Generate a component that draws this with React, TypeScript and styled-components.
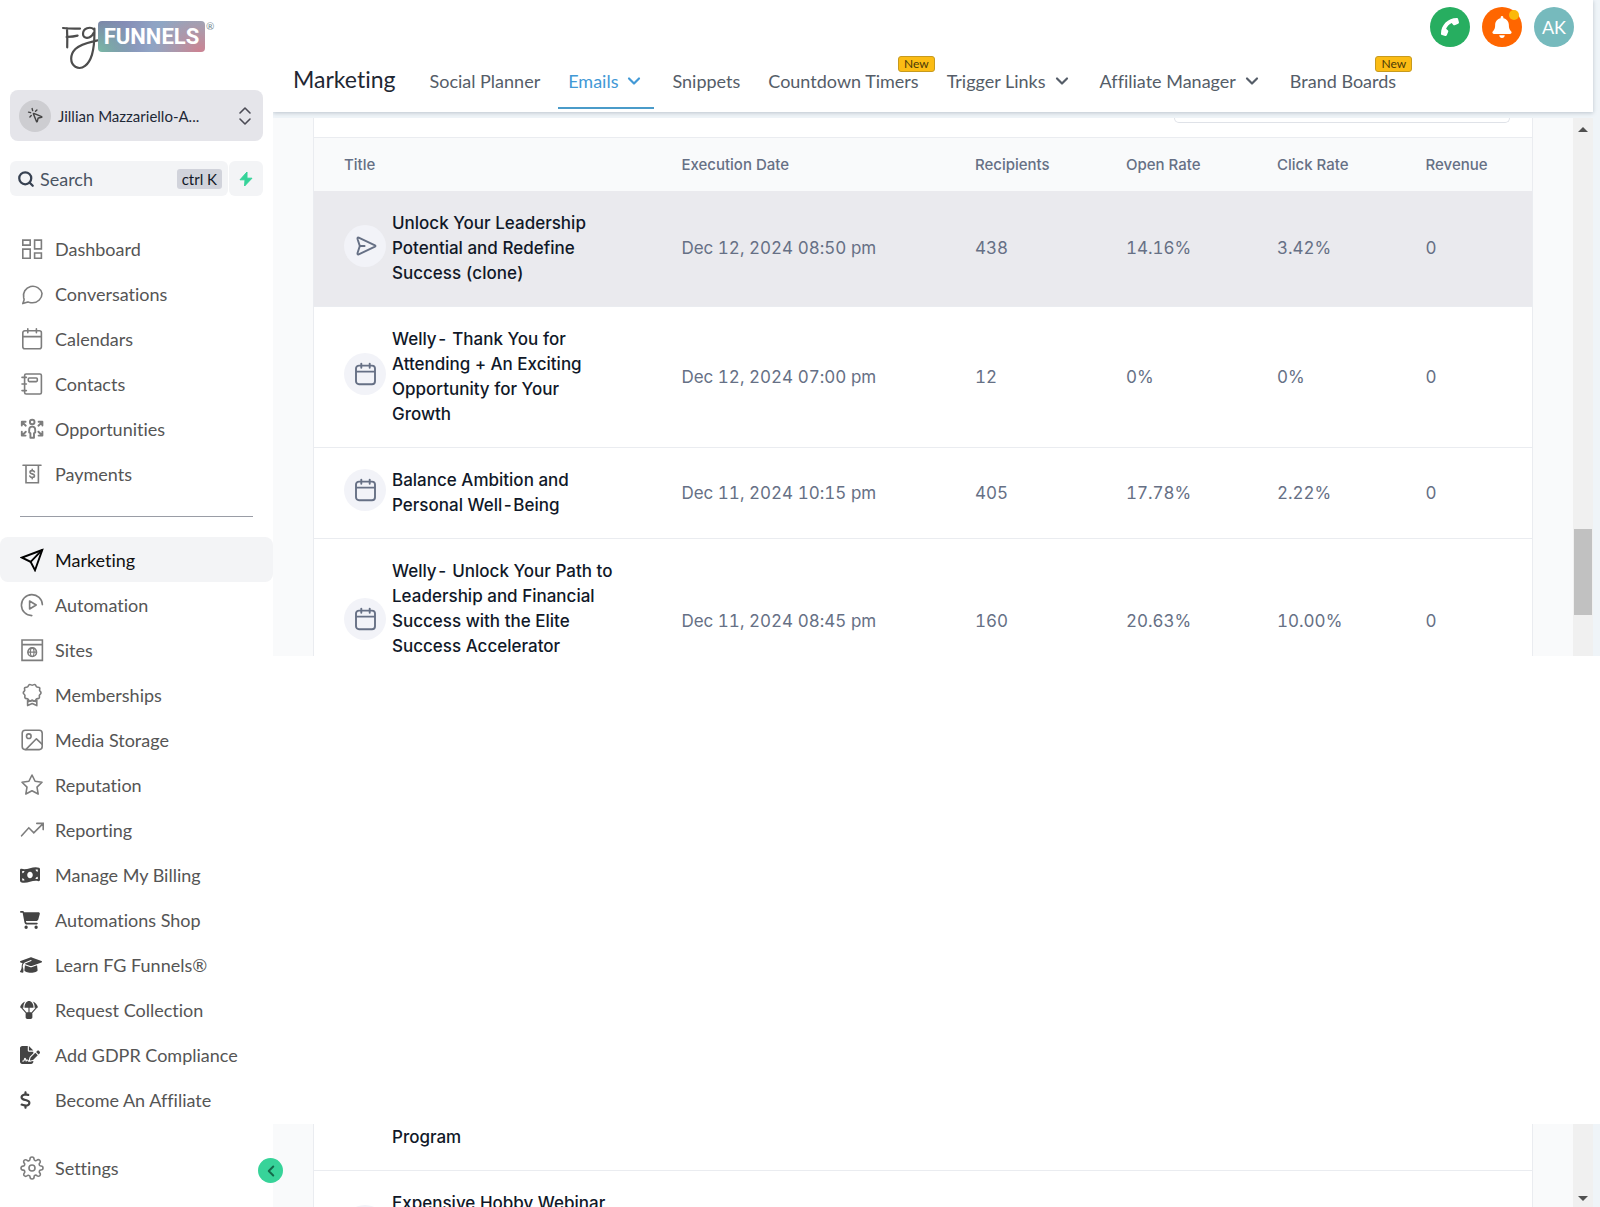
import React from "react";
import styled, { createGlobalStyle, css } from "styled-components";
import { ChevronDown, ChevronLeft, ChevronsUpDown, MousePointerClick, Search } from "lucide-react";
import { FiSettings, FiStar } from "react-icons/fi";
import {
  FaBell,
  FaCartShopping,
  FaDollarSign,
  FaFileSignature,
  FaGraduationCap,
  FaMoneyBillWave,
  FaParachuteBox,
  FaPhone,
} from "react-icons/fa6";

const GlobalStyle = createGlobalStyle`
  *, *::before, *::after { box-sizing: border-box; }
  body { margin: 0; background: #ffffff; font-family: Lato, "Open Sans", sans-serif; font-variant-ligatures: none; }
  button, input { font-family: inherit; }
  a { color: inherit; text-decoration: none; }
`;

const Shell = styled.div`
  display: flex;
  align-items: stretch;
  min-height: 100vh;
  overflow: hidden;
`;

/* ---------- Sidebar ---------- */

const Sidebar = styled.aside`
  position: relative;
  z-index: 2;
  flex: 0 0 273px;
  min-width: 0;
  display: flex;
  flex-direction: column;
  padding-bottom: 17px;
  background: #ffffff;
`;

const LogoLink = styled.a`
  display: flex;
  align-items: flex-start;
  height: 90px;
  padding: 20px 0 0 60px;
`;

const LogoMark = styled.svg`
  flex: none;
  width: 40px;
  height: 50px;
  margin-right: -2px;
`;

const LogoPlate = styled.span`
  display: flex;
  align-items: center;
  justify-content: center;
  width: 107px;
  height: 31px;
  margin-top: 1px;
  border-radius: 4px;
  background:
    radial-gradient(circle at 0% 100%, #79b9a5 0%, transparent 35%),
    radial-gradient(circle at 95% 100%, #cd8292 0%, transparent 45%),
    linear-gradient(100deg, #7c78a8 0%, #8fa3c4 50%, #86b7c6 100%);
  color: #ffffff;
  font-family: Roboto, sans-serif;
  font-size: 22px;
  font-weight: 700;
  line-height: 31px;
`;

const LogoReg = styled.span`
  color: #6d8790;
  font-size: 10px;
  line-height: 13px;
  margin-left: 1px;
`;

const AccountButton = styled.button`
  display: flex;
  align-items: center;
  height: 51px;
  margin: 0 10px;
  padding: 0 6px 0 9px;
  border: 0;
  border-radius: 8px;
  background: #e5e5ea;
  color: #1f2937;
  font-size: 15px;
  text-align: left;
`;

const AccountBadge = styled.span`
  display: grid;
  place-items: center;
  width: 32px;
  height: 32px;
  margin-right: 7px;
  border-radius: 50%;
  background: #cdcdd1;
  color: #444444;
`;

const AccountName = styled.span`
  flex: 1;
`;

const SearchRow = styled.div`
  display: flex;
  gap: 1px;
  margin: 20px 10px 30px;
  height: 35px;
`;

const SearchBox = styled.label`
  flex: 1;
  display: flex;
  align-items: center;
  gap: 5px;
  min-width: 0;
  padding: 0 6px 0 7px;
  border-radius: 6px;
  background: #f3f4f6;
  color: #374151;
  svg { flex: none; }
`;

const SearchInput = styled.input`
  flex: 1;
  width: 100%;
  min-width: 0;
  padding: 0;
  border: 0;
  outline: 0;
  background: transparent;
  color: #4b5563;
  font-size: 18px;
  &::placeholder { color: #4b5563; opacity: 1; }
`;

const Shortcut = styled.kbd`
  flex: none;
  padding: 0 5px;
  border-radius: 3px;
  background: #d1d3db;
  color: #111827;
  font-family: inherit;
  font-size: 15px;
  line-height: 20px;
`;

const QuickButton = styled.button`
  flex: none;
  display: grid;
  place-items: center;
  width: 34px;
  padding: 0;
  border: 0;
  border-radius: 6px;
  background: #f3f4f6;
`;

const NavList = styled.nav`
  display: flex;
  flex-direction: column;
`;

const NavItem = styled.a<{ $active?: boolean }>`
  display: flex;
  align-items: center;
  gap: 11px;
  height: 45px;
  padding: 0 20px;
  border-radius: 8px;
  font-size: 18px;
  line-height: 24px;
  white-space: nowrap;
  color: ${(p) => (p.$active ? "#111111" : "#555555")};
  background: ${(p) => (p.$active ? "#f3f4f6" : "transparent")};
`;

const NavIcon = styled.span<{ $solid?: number; $active?: boolean }>`
  flex: none;
  display: flex;
  align-items: center;
  width: 24px;
  height: 24px;
  color: ${(p) => (p.$active ? "#000000" : p.$solid ? "#444444" : "#7d7d7d")};
  svg {
    display: block;
    flex: none;
    width: ${(p) => p.$solid ?? 24}px;
    height: ${(p) => (p.$solid ? 18 : 24)}px;
  }
`;

const NavDivider = styled.hr`
  width: auto;
  height: 1px;
  margin: 20px 20px;
  border: 0;
  background: #9a9da6;
`;

const SettingsSlot = styled.div`
  margin-top: 23px;
`;

const CollapseButton = styled.button`
  position: absolute;
  right: -10px;
  bottom: 24px;
  display: grid;
  place-items: center;
  width: 25px;
  height: 25px;
  padding: 0;
  border: 0;
  border-radius: 50%;
  background: #37d399;
  color: #14684a;
`;

/* ---------- Main column ---------- */

const Main = styled.main`
  flex: 1;
  min-width: 0;
  display: flex;
  flex-direction: column;
`;

const HeaderBand = styled.div`
  height: 118px;
  padding-right: 7px;
  background: #eff4f8;
`;

const Header = styled.header`
  display: flex;
  flex-direction: column;
  height: 112px;
  background: #ffffff;
  box-shadow: 0 1px 4px rgba(71, 85, 105, 0.3);
`;

const HeaderActions = styled.div`
  display: flex;
  justify-content: flex-end;
  gap: 12px;
  padding: 7px 19px 0 0;
`;

const RoundButton = styled.button<{ $bg: string }>`
  position: relative;
  display: grid;
  place-items: center;
  width: 40px;
  height: 40px;
  padding: 0;
  border: 0;
  border-radius: 50%;
  background: ${(p) => p.$bg};
  color: #ffffff;
  font-size: 18px;
`;

const AlertDot = styled.span`
  position: absolute;
  top: 3px;
  right: 3px;
  width: 10px;
  height: 10px;
  border-radius: 50%;
  background: #fbb90b;
`;

const TabBar = styled.div`
  display: flex;
  align-items: center;
  gap: 8px;
  height: 62px;
  padding-left: 20px;
`;

const SectionTitle = styled.h1`
  margin: 0 16px 0 0;
  padding-top: 2px;
  color: #1f2733;
  font-size: 23px;
  font-weight: 400;
  line-height: 28px;
`;

const Tab = styled.a<{ $active?: boolean }>`
  position: relative;
  display: flex;
  align-items: center;
  gap: 6px;
  height: 62px;
  padding: 9px 10px 2px;
  border-bottom: 2px solid ${(p) => (p.$active ? "#4a9bc9" : "transparent")};
  color: ${(p) => (p.$active ? "#4299d6" : "#555d68")};
  font-size: 18px;
  line-height: 24px;
  white-space: nowrap;
`;

const NewBadge = styled.span`
  position: absolute;
  top: 9px;
  right: -6px;
  padding: 0 5px;
  border: 1px solid #c79a1e;
  border-radius: 3px;
  background: #fbbc14;
  color: #4a3a08;
  font-size: 12px;
  line-height: 14px;
`;

/* ---------- Campaign list ---------- */

const Pane = styled.section<{ $height: number }>`
  flex: none;
  display: flex;
  height: ${(p) => p.$height}px;
  padding-right: 7px;
  overflow: hidden;
  background: #eff4f8;
`;

const PaneBody = styled.div`
  flex: 1;
  min-width: 0;
  padding: 0 40px;
  background: #f9fafb;
`;

const Blank = styled.div`
  flex: 1;
  background: #ffffff;
`;

const Card = styled.div`
  min-height: 100%;
  border: solid #eaecf0;
  border-width: 0 1px;
  background: #ffffff;
`;

const Toolbar = styled.div`
  display: flex;
  justify-content: flex-end;
  align-items: flex-start;
  height: 20px;
  padding-right: 22px;
  border-bottom: 1px solid #eaecf0;
`;

const FilterInput = styled.input`
  width: 336px;
  height: 5px;
  padding: 0;
  border: 1px solid #dfe2e8;
  border-top: 0;
  border-radius: 0 0 8px 8px;
  background: #ffffff;
`;

const Table = styled.table`
  width: 100%;
  border-collapse: collapse;
  table-layout: fixed;
  font-family: Inter, sans-serif;
  text-align: left;
`;

const Col = styled.col<{ $share: number }>`
  width: ${(p) => p.$share}%;
`;

const HeadCell = styled.th`
  height: 53px;
  padding: 0 0 0 30px;
  background: #f9fafb;
  color: #667085;
  font-size: 15px;
  font-weight: 500;
`;

const Row = styled.tr<{ $selected?: boolean }>`
  border-bottom: 1px solid #eaecf0;
  background: ${(p) => (p.$selected ? "#eaeaee" : "#ffffff")};
`;

const Cell = styled.td`
  padding: 20px 0 20px 30px;
  color: #667085;
  font-size: 17px;
  font-variant-numeric: tabular-nums;
  line-height: 25px;
  white-space: nowrap;
`;

const TitleCell = styled(Cell)`
  padding-right: 31px;
  color: #101828;
  font-weight: 500;
  white-space: normal;
`;

const TitleWrap = styled.div<{ $lines?: number }>`
  display: flex;
  align-items: center;
  gap: 6px;
  min-height: ${(p) => (p.$lines ?? 0) * 25}px;
`;

const TitleText = styled.span`
  align-self: flex-start;
`;

const StatusDot = styled.span`
  flex: none;
  display: grid;
  place-items: center;
  width: 42px;
  height: 42px;
  margin-bottom: 6px;
  border-radius: 50%;
  background: #f2f3f8;
  color: #667085;
`;

const ContinuedCell = styled(TitleCell)`
  padding-top: 1px;
  padding-left: 78px;
`;

const Track = styled.div`
  flex: none;
  display: flex;
  flex-direction: column;
  align-items: center;
  width: 20px;
  background: #f0f0f0;
`;

const Arrow = styled.span<{ $down?: boolean }>`
  width: 0;
  height: 0;
  border: 5px solid transparent;
  ${(p) =>
    p.$down
      ? css`
          margin-top: auto;
          margin-bottom: 1px;
          border-top-color: #505050;
        `
      : css`
          margin-top: 4px;
          border-bottom-color: #505050;
        `}
`;

const Thumb = styled.span`
  width: 18px;
  height: 86px;
  margin-top: auto;
  margin-bottom: 41px;
  background: #c1c1c1;
`;

/* ---------- Icons ---------- */

const Stroke = ({ children, width = 1.6 }: { children: React.ReactNode; width?: number }) => (
  <svg
    viewBox="0 0 24 24"
    width="24"
    height="24"
    fill="none"
    stroke="currentColor"
    strokeWidth={width}
    strokeLinecap="round"
    strokeLinejoin="round"
    aria-hidden="true"
  >
    {children}
  </svg>
);

const DashboardIcon = () => (
  <Stroke width={1.6}>
    <path d="M2.8 3.1h7.4v5H2.8zM14.6 3.1h6.8v8.8h-6.8zM2.8 12.1h7.4v9.2H2.8zM14.6 16h6.8v5.3h-6.8z" strokeLinejoin="miter" />
  </Stroke>
);

const ChatIcon = () => (
  <Stroke width={1.6}>
    <path d="M22 11.4a9.400 9.400 0 0 1-9.400 9.400c-1.300 0-2.500-.2-3.600-.6-.5-.2-.8-.2-1.200-.1L2.800 21.600c.8-2.200 1.300-3.300 1.300-4.200 0-.5-.2-.9-.4-1.500A9.400 9.400 0 1 1 22 11.400z" />
  </Stroke>
);

const CalendarIcon = () => (
  <Stroke>
    <path d="M2.800 9.600h18.600M7.800 1.800v4M16.400 1.800v4M4.800 3.800h14.600a2 2 0 0 1 2 2v14a2 2 0 0 1-2 2H4.800a2 2 0 0 1-2-2v-14a2 2 0 0 1 2-2z" />
  </Stroke>
);

const ContactsIcon = () => (
  <Stroke width={1.6}>
    <rect x="4.600" y="2" width="16.800" height="20" rx="1.500" />
    <rect x="8.300" y="6" width="9" height="3.600" rx="1" />
    <path d="M2 5.400h4.400M2 12h4.400M2 18.600h4.400" />
  </Stroke>
);

const OpportunitiesIcon = () => (
  <Stroke width={1.9}>
    <circle cx="12.200" cy="5" r="2.300" />
    <path d="M9.200 12.800c0-2 1.200-3.200 3-3.200s3 1.200 3 3.200v2.600l-1.200.800v4.600h-3.600v-4.600l-1.200-.8z" />
    <path d="M1.800 8.600V4.800h3.800M2.200 5.200l3.600 3.500M22.400 8.600V4.800h-3.800M22 5.200l-3.600 3.500M1.800 14.800v3.800h3.800M2.200 18.200l3.600-3.500M22.400 14.800v3.800h-3.800M22 18.200l-3.600-3.500" />
  </Stroke>
);

const PaymentsIcon = () => (
  <Stroke width={1.600}>
    <path d="M3 3.200h18M6 3.200v17.600h12.400V3.200" strokeLinejoin="miter" />
    <path d="M14.400 9.800c-.3-.8-1.100-1.200-2.200-1.200-1.300 0-2.200.6-2.200 1.600 0 2.300 4.500 1 4.500 3.500 0 1.100-1 1.700-2.300 1.700-1.200 0-2.100-.5-2.400-1.400M12.200 7.200v1.200M12.200 15.600v1.200" />
  </Stroke>
);

const PlaneIcon = () => (
  <Stroke width={1.900}>
    <path d="M22.200 2 2 9.600l8.600 4.200L15 22.200z" strokeLinejoin="miter" />
    <path d="M22 2.200 10.600 13.800" />
  </Stroke>
);

const AutomationIcon = () => (
  <Stroke width={1.600}>
    <path d="M22.400 11.600A10.500 10.500 0 1 0 11.800 22.600" />
    <path d="M9.600 8v8l6.600-4z" />
  </Stroke>
);

const SitesIcon = () => (
  <Stroke width={1.600}>
    <path d="M2 2h20.400v20.400H2zM2 6.600h20.400" strokeLinejoin="miter" />
    <circle cx="12.200" cy="14.200" r="4.300" />
    <ellipse cx="12.200" cy="14.200" rx="1.800" ry="4.300" strokeWidth="1.200" />
    <path d="M8 14.200h8.400" strokeWidth="1.200" />
  </Stroke>
);

const RibbonIcon = () => (
  <Stroke width={1.600}>
    <path d="M9.200 1.700c1.100-.7 2.100.5 3 .5s1.900-1.200 3-.5c1 .6.700 1.700 1.500 2.200s2.200 0 2.900.900c.7 1-.3 1.800 0 2.700s1.500 1.300 1.400 2.500c-.1 1.100-1.300 1.300-1.600 2.200s.5 1.900-.2 2.800-1.900.4-2.700.9-.7 1.800-1.800 2.200-1.700-.7-2.500-.7-1.600 1.100-2.600.7-1-1.700-1.800-2.200-2 0-2.700-.9 0-1.900-.2-2.800-1.500-1.100-1.600-2.200c-.1-1.200 1.100-1.600 1.400-2.500s-.700-1.700 0-2.700c.7-.9 2.100-.4 2.900-.9s.5-1.600 1.600-2.200z" />
    <path d="M7.600 17v5.600l4.600-2 4.600 2V17M8 18.800l4.200-1.600 4.200 1.600" />
  </Stroke>
);

const MediaIcon = () => (
  <Stroke>
    <rect x="2.200" y="2.200" width="20" height="19.400" rx="3" />
    <circle cx="8.800" cy="8.200" r="2.300" />
    <path d="M6 21.400 16.400 10.800l5.600 5.400" />
  </Stroke>
);

const TrendIcon = () => (
  <Stroke>
    <path d="M1.600 17.800 8.800 9.800l5 5L23 5.600M16.800 5.400h6.400v6.200" strokeLinejoin="miter" />
  </Stroke>
);

const SendIcon = () => (
  <Stroke width={1.900}>
    <path d="M6.600 12h5M6.700 12.400 4.600 18.800c-.4 1.400 0 1.900 1.100 1.500L22 12.700c.7-.4.700-1 0-1.400L5.700 3.700c-1.100-.4-1.500.1-1.100 1.500l2.100 6.400c.1.300.1.500 0 .8z" />
  </Stroke>
);

const ScheduledIcon = () => (
  <Stroke width={1.900}>
    <path d="M3 9.600h19M8.300 1.600v4.200M16.700 1.600v4.200M6 3.600h13a3 3 0 0 1 3 3v12.600a3 3 0 0 1-3 3H6a3 3 0 0 1-3-3V6.600a3 3 0 0 1 3-3z" />
  </Stroke>
);

const BoltIcon = () => (
  <svg viewBox="0 0 16 16" width="16" height="16" aria-hidden="true">
    <path d="M9 1 2 8.800h5L6.600 15 14 7.200H9z" fill="#34d399" stroke="#34d399" strokeWidth="1" strokeLinejoin="round" />
  </svg>
);

/* ---------- Data ---------- */

type NavEntry = { label: string; icon: React.ReactNode; solid?: number; active?: boolean };

const primaryNav: NavEntry[] = [
  { label: "Dashboard", icon: <DashboardIcon /> },
  { label: "Conversations", icon: <ChatIcon /> },
  { label: "Calendars", icon: <CalendarIcon /> },
  { label: "Contacts", icon: <ContactsIcon /> },
  { label: "Opportunities", icon: <OpportunitiesIcon /> },
  { label: "Payments", icon: <PaymentsIcon /> },
];

const secondaryNav: NavEntry[] = [
  { label: "Marketing", icon: <PlaneIcon />, active: true },
  { label: "Automation", icon: <AutomationIcon /> },
  { label: "Sites", icon: <SitesIcon /> },
  { label: "Memberships", icon: <RibbonIcon /> },
  { label: "Media Storage", icon: <MediaIcon /> },
  { label: "Reputation", icon: <FiStar strokeWidth={1.6} /> },
  { label: "Reporting", icon: <TrendIcon /> },
  { label: "Manage My Billing", icon: <FaMoneyBillWave />, solid: 20 },
  { label: "Automations Shop", icon: <FaCartShopping />, solid: 20 },
  { label: "Learn FG Funnels®", icon: <FaGraduationCap />, solid: 22 },
  { label: "Request Collection", icon: <FaParachuteBox />, solid: 18 },
  { label: "Add GDPR Compliance", icon: <FaFileSignature />, solid: 20 },
  { label: "Become An Affiliate", icon: <FaDollarSign />, solid: 11 },
];

const tabs = [
  { label: "Social Planner" },
  { label: "Emails", menu: true, active: true },
  { label: "Snippets" },
  { label: "Countdown Timers", fresh: true },
  { label: "Trigger Links", menu: true },
  { label: "Affiliate Manager", menu: true },
  { label: "Brand Boards", fresh: true },
];

const columns = [
  { label: "Title", share: 27.7 },
  { label: "Execution Date", share: 24.1 },
  { label: "Recipients", share: 12.4 },
  { label: "Open Rate", share: 12.4 },
  { label: "Click Rate", share: 12.2 },
  { label: "Revenue", share: 11.2 },
];

type Campaign = { title: string; values: string[]; selected?: boolean; lines?: number };

const campaigns: Campaign[] = [
  {
    title: "Unlock Your Leadership Potential and Redefine Success (clone)",
    values: ["Dec 12, 2024 08:50 pm", "438", "14.16%", "3.42%", "0"],
    selected: true,
  },
  {
    title: "Welly- Thank You for Attending + An Exciting Opportunity for Your Growth",
    values: ["Dec 12, 2024 07:00 pm", "12", "0%", "0%", "0"],
  },
  {
    title: "Balance Ambition and Personal Well-Being",
    values: ["Dec 11, 2024 10:15 pm", "405", "17.78%", "2.22%", "0"],
  },
  {
    title: "Welly- Unlock Your Path to Leadership and Financial Success with the Elite Success Accelerator",
    values: ["Dec 11, 2024 08:45 pm", "160", "20.63%", "10.00%", "0"],
    lines: 5,
  },
];

const NavLinks = ({ items }: { items: NavEntry[] }) => (
  <>
    {items.map((item) => (
      <NavItem key={item.label} href="#" $active={item.active}>
        <NavIcon $solid={item.solid} $active={item.active}>
          {item.icon}
        </NavIcon>
        {item.label}
      </NavItem>
    ))}
  </>
);

const Columns = () => (
  <colgroup>
    {columns.map((c) => (
      <Col key={c.label} $share={c.share} />
    ))}
  </colgroup>
);

export default function App() {
  return (
    <>
      <GlobalStyle />
      <Shell>
        <Sidebar>
          <LogoLink href="#" aria-label="FG Funnels">
            <LogoMark
              viewBox="0 0 40 50"
              fill="none"
              stroke="#4d4d4d"
              strokeWidth="2.200"
              strokeLinecap="round"
              strokeLinejoin="round"
              aria-hidden="true"
            >
              <path d="M3 8c6 .8 12 .8 17 .6M7 8.400c.3 7 .4 13 .2 19M6.600 17c4-.2 8-.6 11-1.400" />
              <path d="M34 9.400c-4-3.400-11-1-11 4.600 0 5.400 7.600 5 10.400-.8M34.400 8.600c.2 9 .2 17-2.400 26-3 10-10 16-16.600 12.200-5.400-3.400-5.800-12 0-17.800 6-5.600 14-6.600 22-8.600" />
            </LogoMark>
            <LogoPlate>FUNNELS</LogoPlate>
            <LogoReg>®</LogoReg>
          </LogoLink>

          <AccountButton type="button">
            <AccountBadge>
              <MousePointerClick size={17} strokeWidth={2} />
            </AccountBadge>
            <AccountName>Jillian Mazzariello-A...</AccountName>
            <ChevronsUpDown size={24} strokeWidth={1.6} color="#4b4b55" />
          </AccountButton>

          <SearchRow>
            <SearchBox>
              <Search size={18} strokeWidth={3} aria-hidden="true" />
              <SearchInput type="text" placeholder="Search" aria-label="Search" />
              <Shortcut>ctrl K</Shortcut>
            </SearchBox>
            <QuickButton type="button" aria-label="Quick actions">
              <BoltIcon />
            </QuickButton>
          </SearchRow>

          <NavList aria-label="Primary">
            <NavLinks items={primaryNav} />
            <NavDivider />
            <NavLinks items={secondaryNav} />
          </NavList>
          <SettingsSlot>
            <NavItem href="#">
              <NavIcon>
                <FiSettings strokeWidth={1.6} />
              </NavIcon>
              Settings
            </NavItem>
          </SettingsSlot>
          <CollapseButton type="button" aria-label="Collapse sidebar">
            <ChevronLeft size={18} strokeWidth={2.6} />
          </CollapseButton>
        </Sidebar>

        <Main>
          <HeaderBand>
            <Header>
              <HeaderActions>
                <RoundButton type="button" $bg="#27ae60" aria-label="Call">
                  <FaPhone size={18} transform="rotate(90)" />
                </RoundButton>
                <RoundButton type="button" $bg="#ff6600" aria-label="Notifications">
                  <FaBell size={22} />
                  <AlertDot />
                </RoundButton>
                <RoundButton type="button" $bg="#76babd">
                  AK
                </RoundButton>
              </HeaderActions>
              <TabBar>
                <SectionTitle>Marketing</SectionTitle>
                {tabs.map((tab) => (
                  <Tab key={tab.label} href="#" $active={tab.active}>
                    {tab.label}
                    {tab.menu && <ChevronDown size={20} strokeWidth={2.6} aria-hidden="true" />}
                    {tab.fresh && <NewBadge>New</NewBadge>}
                  </Tab>
                ))}
              </TabBar>
            </Header>
          </HeaderBand>

          <Pane $height={538}>
            <PaneBody>
              <Card>
                <Toolbar>
                  <FilterInput type="text" aria-label="Filter campaigns" />
                </Toolbar>
                <Table>
                  <Columns />
                  <thead>
                    <tr>
                      {columns.map((c) => (
                        <HeadCell key={c.label} scope="col">
                          {c.label}
                        </HeadCell>
                      ))}
                    </tr>
                  </thead>
                  <tbody>
                    {campaigns.map((c) => (
                      <Row key={c.title} $selected={c.selected}>
                        <TitleCell>
                          <TitleWrap $lines={c.lines}>
                            <StatusDot>{c.selected ? <SendIcon /> : <ScheduledIcon />}</StatusDot>
                            <TitleText>{c.title}</TitleText>
                          </TitleWrap>
                        </TitleCell>
                        {c.values.map((value, i) => (
                          <Cell key={i}>{value}</Cell>
                        ))}
                      </Row>
                    ))}
                  </tbody>
                </Table>
              </Card>
            </PaneBody>
            <Track aria-hidden="true">
              <Arrow />
              <Thumb />
            </Track>
          </Pane>

          <Blank />

          <Pane $height={83}>
            <PaneBody>
              <Card>
                <Table>
                  <tbody>
                    <Row>
                      <ContinuedCell>Program</ContinuedCell>
                    </Row>
                    <Row>
                      <TitleCell>
                        <TitleWrap $lines={3}>
                          <StatusDot />
                          <TitleText>Expensive Hobby Webinar</TitleText>
                        </TitleWrap>
                      </TitleCell>
                    </Row>
                  </tbody>
                </Table>
              </Card>
            </PaneBody>
            <Track aria-hidden="true">
              <Arrow $down />
            </Track>
          </Pane>
        </Main>
      </Shell>
    </>
  );
}
